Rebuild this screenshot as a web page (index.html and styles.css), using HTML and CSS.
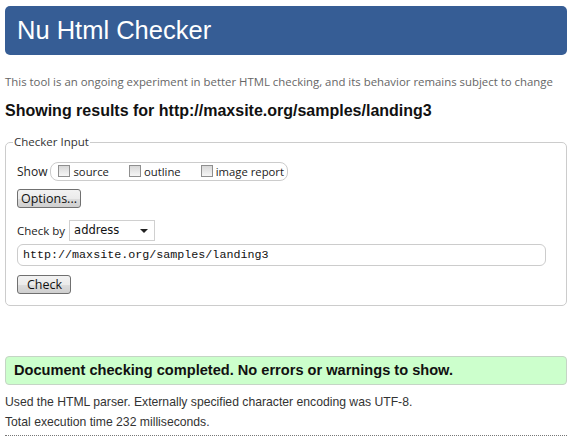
FILE: index.html
```html
<!DOCTYPE html>
<html>
<head>
<meta charset="utf-8">
<title>Nu Html Checker</title>
<link rel="stylesheet" href="styles.css">
</head>
<body>
<div class="page">
  <h1 class="header">Nu Html Checker</h1>
  <p class="intro">This tool is an ongoing experiment in better HTML checking, and its behavior remains subject to change</p>
  <h2 class="results">Showing results for http://maxsite.org/samples/landing3</h2>
  <fieldset class="input">
    <legend>Checker Input</legend>
    <div class="show-row">
      <span class="show-label">Show</span>
      <span class="show-group">
        <label class="opt"><span class="cb"></span>source</label>
        <label class="opt"><span class="cb"></span>outline</label>
        <label class="opt"><span class="cb"></span>image report</label>
      </span>
    </div>
    <div class="btn-row"><span class="btn">Options...</span></div>
    <div class="checkby-row">
      <span class="checkby-label">Check by</span>
      <span class="select">address<span class="arrow"></span></span>
    </div>
    <div class="url">http://maxsite.org/samples/landing3</div>
    <div class="btn-row check-row"><span class="btn check">Check</span></div>
  </fieldset>
  <div class="success">Document checking completed. No errors or warnings to show.</div>
  <p class="info">Used the HTML parser. Externally specified character encoding was UTF-8.</p>
  <p class="info">Total execution time 232 milliseconds.</p>
  <div class="rule"></div>
</div>
</body>
</html>
```

FILE: styles.css
```css
html, body {
  margin: 0;
  padding: 0;
  background: #fff;
}
.page {
  padding: 6px 8px 0 5px;
  font-family: "Liberation Sans", Arial, sans-serif;
  color: #222;
}
.header {
  margin: 0;
  height: 49px;
  line-height: 49px;
  padding-left: 12px;
  background: #365d95;
  border-radius: 5px;
  color: #fff;
  font-size: 25.5px;
  font-weight: normal;
}
.intro {
  margin: 19px 0 0 0;
  font-family: "Open Sans", sans-serif;
  font-size: 11.4px;
  line-height: 16px;
  color: #666;
}
.results {
  margin: 11px 0 0 0;
  font-size: 16px;
  line-height: 19px;
  font-weight: bold;
  color: #111;
}
.input {
  margin: 14px 0 0 0;
  padding: 11px 11px 11px 11px;
  border: 1px solid #ccc;
  border-radius: 5px;
  font-family: "Open Sans", sans-serif;
  font-size: 12px;
  color: #222;
}
.input legend {
  padding: 0 1px;
  margin-left: -4px;
  font-size: 11.5px;
  line-height: 16px;
  color: #333;
}
.show-row {
  display: flex;
  align-items: center;
  gap: 3px;
  height: 20px;
}
.show-label {
  font-size: 12px;
}
.show-group {
  display: flex;
  align-items: center;
  gap: 20px;
  height: 19px;
  box-sizing: border-box;
  padding: 0 3px 0 7px;
  border: 1px solid #ccc;
  border-radius: 8px;
}
.opt {
  display: flex;
  align-items: center;
  gap: 3px;
  font-size: 11.3px;
}
.cb {
  display: inline-block;
  width: 12px;
  height: 12px;
  border: 1px solid #8f8f8f;
  background: linear-gradient(#d8d8d8, #f6f6f6);
  box-sizing: border-box;
}
.btn-row {
  display: flex;
  margin-top: 8px;
}
.check-row {
  margin-top: 9px;
}
.btn {
  display: inline-block;
  height: 19px;
  line-height: 17px;
  box-sizing: border-box;
  padding: 0 3px 0 3px;
  border: 1px solid #707070;
  border-radius: 3px;
  background: linear-gradient(#f2f2f2 0%, #ebebeb 50%, #dddddd 51%, #cfcfcf 100%);
  font-size: 12.5px;
  color: #111;
}
.check {
  padding: 0 8px 0 9px;
}
.checkby-row {
  display: flex;
  align-items: center;
  gap: 4px;
  margin-top: 12px;
}
.checkby-label {
  font-size: 11.5px;
}
.select {
  position: relative;
  display: inline-block;
  width: 86px;
  height: 21px;
  line-height: 19px;
  box-sizing: border-box;
  padding-left: 4px;
  border: 1px solid #d0d0d0;
  font-family: "DejaVu Sans", Verdana, sans-serif;
  font-size: 11.5px;
  color: #111;
}
.arrow {
  position: absolute;
  right: 6px;
  top: 8px;
  width: 0;
  height: 0;
  border-left: 4px solid transparent;
  border-right: 4px solid transparent;
  border-top: 4px solid #222;
}
.url {
  margin-top: 3px;
  width: 529px;
  height: 22px;
  line-height: 20px;
  box-sizing: border-box;
  padding-left: 5px;
  border: 1px solid #ccc;
  border-radius: 6px;
  font-family: "Liberation Mono", "Courier New", monospace;
  font-size: 11.7px;
  color: #111;
}
.success {
  margin-top: 50px;
  height: 29px;
  line-height: 27px;
  box-sizing: border-box;
  padding-left: 8px;
  background: #ccffcc;
  border: 1px solid #c5d5c5;
  border-radius: 4px;
  font-size: 14.6px;
  font-weight: bold;
  color: #111;
}
.info {
  margin: 0;
  font-size: 12.2px;
  line-height: 20px;
  color: #333;
}
.success + .info {
  margin-top: 7px;
}
.rule {
  margin-top: 3px;
  border-top: 1px dotted #777;
}
```
